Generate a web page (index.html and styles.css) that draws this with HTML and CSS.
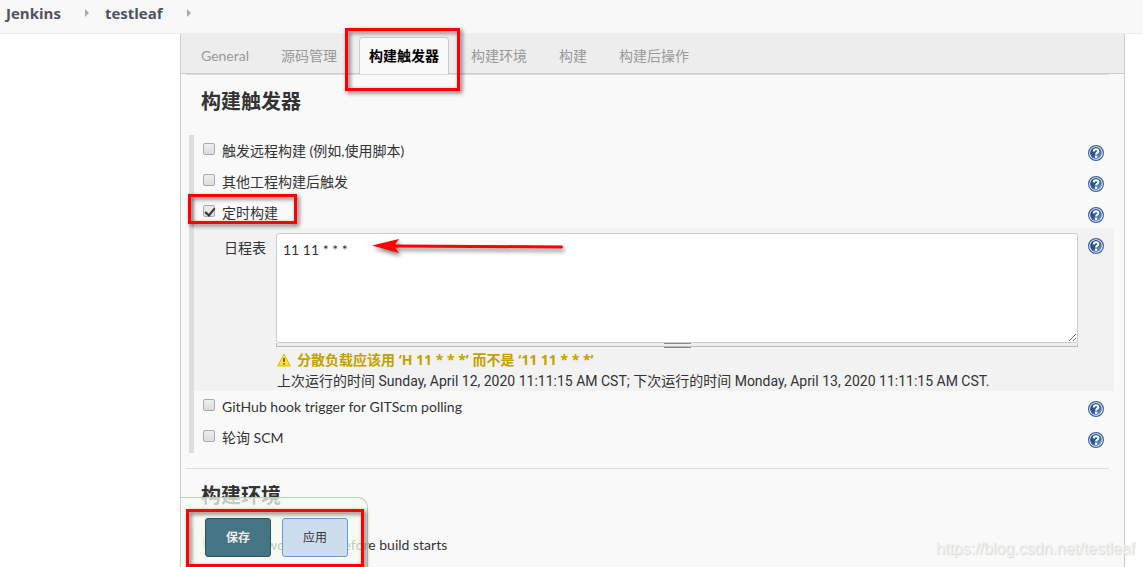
FILE: index.html
```html
<!DOCTYPE html>
<html lang="zh-CN">

<head>
    <meta charset="UTF-8">
    <meta name="viewport" content="width=device-width, initial-scale=1.0">
    <title>testleaf Config [Jenkins]</title>
    <link rel="stylesheet" href="styles.css">
</head>

<body>
    <svg class="sprite" width="0" height="0">
        <defs>
            <linearGradient id="blue" x1="0" y1="0" x2="1" y2="1">
                <stop offset="0" stop-color="#16417f" />
                <stop offset="0.5" stop-color="#2f5a9a" />
                <stop offset="1" stop-color="#8fb0dc" />
            </linearGradient>
            <symbol id="help" viewBox="0 0 16 16">
                <circle cx="8" cy="8" r="7.4" fill="#fff" stroke="#3a619c" stroke-width="1.2" />
                <circle cx="8" cy="8" r="5.9" fill="url(#blue)" />
                <path d="M5.7 6.4C5.7 3.4 10.4 3.5 10.3 6.1C10.2 7.7 8.1 7.6 8.1 9.6" fill="none" stroke="#fff" stroke-width="2" />
                <rect x="7" y="10.6" width="2.2" height="2.2" fill="#fff" />
            </symbol>
        </defs>
    </svg>

    <nav class="breadcrumbs">
        <a href="#">Jenkins</a>
        <span class="arrow"></span>
        <a href="#">testleaf</a>
        <span class="arrow"></span>
    </nav>

    <div class="page">
        <aside class="side-panel"></aside>

        <main class="main-panel">
            <nav class="tab-bar">
                <a class="tab" href="#">General</a>
                <a class="tab" href="#">源码管理</a>
                <a class="tab active" href="#">构建触发器<span class="mark mark-tab"></span></a>
                <a class="tab" href="#">构建环境</a>
                <a class="tab" href="#">构建</a>
                <a class="tab" href="#">构建后操作</a>
            </nav>

            <form class="config">
                <section class="section">
                    <h2>构建触发器</h2>
                    <div class="group">
                        <div class="row">
                            <input type="checkbox" id="remote">
                            <label for="remote">触发远程构建 (例如,使用脚本)</label>
                            <button type="button" class="help" aria-label="帮助"><svg><use href="#help" /></svg></button>
                        </div>
                        <div class="row">
                            <input type="checkbox" id="upstream">
                            <label for="upstream">其他工程构建后触发</label>
                            <button type="button" class="help" aria-label="帮助"><svg><use href="#help" /></svg></button>
                        </div>
                        <div class="row">
                            <input type="checkbox" id="timer" checked>
                            <label for="timer">定时构建</label>
                            <button type="button" class="help" aria-label="帮助"><svg><use href="#help" /></svg></button>
                            <span class="mark mark-row"></span>
                        </div>
                        <div class="schedule">
                            <label for="spec">日程表</label>
                            <div class="editor">
                                <textarea id="spec" spellcheck="false">11 11 * * *</textarea>
                                <div class="grip"></div>
                                <p class="warning">
                                    <svg viewBox="0 0 14 14">
                                        <path d="M7 1L13.3 13H0.7Z" fill="#fbe334" stroke="#d9b81c" stroke-linejoin="round" />
                                        <path d="M7 5V9M7 10.2V11.6" stroke="#5c4a10" stroke-width="1.6" />
                                    </svg>
                                    分散负载应该用 ‘H 11 * * *’ 而不是 ‘11 11 * * *’
                                </p>
                                <p class="run-times">上次运行的时间 Sunday, April 12, 2020 11:11:15 AM CST; 下次运行的时间 Monday, April 13, 2020 11:11:15 AM CST.</p>
                                <svg class="pointer" viewBox="0 0 194 16">
                                    <path d="M0 6.5L27 0L23 5.5L190 6.5Q192 8 190 9.5L23 8.5L27 14Z" fill="#f00" />
                                </svg>
                            </div>
                            <button type="button" class="help" aria-label="帮助"><svg><use href="#help" /></svg></button>
                        </div>
                        <div class="row">
                            <input type="checkbox" id="github">
                            <label for="github">GitHub hook trigger for GITScm polling</label>
                            <button type="button" class="help" aria-label="帮助"><svg><use href="#help" /></svg></button>
                        </div>
                        <div class="row">
                            <input type="checkbox" id="scm">
                            <label for="scm">轮询 SCM</label>
                            <button type="button" class="help" aria-label="帮助"><svg><use href="#help" /></svg></button>
                        </div>
                    </div>
                </section>

                <section class="section">
                    <h2>构建环境</h2>
                    <div class="group">
                        <div class="row">
                            <input type="checkbox" id="cleanup">
                            <label for="cleanup">Delete workspace before build starts</label>
                        </div>
                    </div>
                </section>

                <div class="bottom-sticker">
                    <button type="submit" class="btn primary">保存</button>
                    <button type="button" class="btn">应用</button>
                    <span class="mark mark-buttons"></span>
                </div>
            </form>
        </main>
    </div>

    <div class="watermark">https://blog.csdn.net/testleaf</div>
</body>

</html>
```

FILE: styles.css
```css
* {
    box-sizing: border-box;
}

body {
    display: flex;
    flex-direction: column;
    height: 100vh;
    margin: 0;
    overflow: hidden;
    background-color: #fff;
    color: #333;
    font-family: Lato, "Noto Sans CJK SC", sans-serif;
    font-size: 14px;
    line-height: 20px;
}

h2,
p {
    margin: 0;
}

a {
    color: inherit;
    text-decoration: none;
}

.sprite {
    position: absolute;
}

/* breadcrumbs */
.breadcrumbs {
    display: flex;
    align-items: center;
    height: 34px;
    padding: 0 6px 7px;
    background-color: #f8f8f8;
    border-bottom: 1px solid #eee;
    color: #4d545d;
    font-family: "Open Sans", sans-serif;
    font-size: 15px;
    font-weight: bold;
}

.arrow {
    margin: 0 16px 0 24px;
    border: 4px solid transparent;
    border-left-color: #aaa;
    border-right: 0;
}

/* layout */
.page {
    display: flex;
    flex: 1;
    min-height: 0;
    padding-right: 18px;
}

.side-panel {
    width: 180px;
}

.main-panel {
    position: relative;
    flex: 1;
    background-color: #f9f9f9;
    border: 1px solid #ccc;
    border-width: 0 1px;
}

/* tabs */
.tab-bar {
    display: flex;
    align-items: flex-end;
    gap: 12px;
    height: 40px;
    padding-left: 10px;
    background-color: #ededed;
    border-bottom: 1px solid #ccc;
    color: #999;
}

.tab {
    position: relative;
    height: 37px;
    margin-bottom: -1px;
    padding: 8px 9px;
    border: 1px solid transparent;
    border-bottom: 0;
}

.tab.active {
    background-color: #f9f9f9;
    border-color: #ccc;
    border-radius: 4px 4px 0 0;
    color: #000;
    font-weight: bold;
}

/* form */
.config {
    padding: 0 10px 0 8px;
}

.section {
    position: relative;
    padding-top: 17px;
}

.section::before {
    content: "";
    position: absolute;
    top: 0;
    right: 5px;
    left: -3px;
    border-top: 1px solid #ddd;
}

.section + .section {
    margin-top: 15px;
}

h2 {
    margin-bottom: 24px;
    padding-left: 12px;
    font-size: 20px;
    line-height: 20px;
}

.group {
    border-left: 5px solid #ddd;
}

.row {
    position: relative;
    display: flex;
    align-items: flex-start;
    height: 31px;
    padding: 6px 10px 0 9px;
}

.row input {
    appearance: none;
    width: 12px;
    height: 12px;
    margin: 2px 7px 0 0;
    background: linear-gradient(#eee, #dcdcdc);
    border: 1px solid #aaa;
    border-radius: 2px;
}

.row input:checked::after {
    content: "";
    display: block;
    width: 4px;
    height: 8px;
    margin: 0 0 0 3px;
    border: solid #333;
    border-width: 0 2px 2px 0;
    transform: rotate(40deg);
}

.help {
    width: 16px;
    height: 16px;
    margin: 4px 0 0 auto;
    padding: 0;
    background: none;
    border: 0;
    cursor: pointer;
}

.help svg {
    display: block;
    width: 16px;
    height: 16px;
}

.schedule {
    display: flex;
    padding: 5px 10px 0 30px;
    background-color: #f2f2f2;
}

.schedule > label {
    width: 52px;
    padding-top: 5px;
}

.schedule .help {
    margin-top: 5px;
}

.editor {
    position: relative;
    flex: 1;
    margin-right: 10px;
}

textarea {
    display: block;
    width: 100%;
    height: 110px;
    padding: 6px;
    border: 1px solid #ccc;
    border-radius: 3px;
    color: #333;
    font: inherit;
    resize: vertical;
}

.grip {
    display: flex;
    justify-content: center;
    height: 4px;
    background-color: #eee;
    border: 1px solid #bbb;
    border-top: 0;
}

.grip::after {
    content: "";
    width: 27px;
    height: 3px;
    border: 1px solid #888;
    border-width: 1px 0;
}

.editor p {
    height: 20px;
    padding-left: 1px;
}

.editor .warning {
    display: flex;
    align-items: center;
    gap: 6px;
    height: 22px;
    margin-top: 2px;
    color: #c4a000;
    font-family: "Open Sans", "Noto Sans CJK SC", sans-serif;
    font-weight: bold;
}

.warning svg {
    width: 14px;
    height: 14px;
}

.run-times {
    font-family: Roboto, "Noto Sans CJK SC", sans-serif;
}

/* save bar */
.bottom-sticker {
    position: absolute;
    bottom: 0;
    left: 0;
    display: flex;
    gap: 11px;
    padding: 20px 19px 10px 24px;
    background-color: rgba(245, 249, 239, 0.75);
    border: 1px solid #b4cfbc;
    border-width: 1px 1px 0 0;
    border-radius: 0 10px 0 0;
}

.btn {
    width: 66px;
    height: 39px;
    padding: 0;
    background-color: #ccdded;
    border: 1px solid #6a9ad0;
    border-radius: 3px;
    color: #333;
    font: inherit;
    font-size: 12px;
    cursor: pointer;
}

.btn.primary {
    background-color: #457485;
    border-color: #2b5361;
    color: #eee;
    font-weight: bold;
}

/* annotations */
.mark {
    position: absolute;
    z-index: 1;
    border: 3px solid #f00;
    filter: drop-shadow(2px 2px 2px rgba(0, 0, 0, 0.6));
    pointer-events: none;
}

.mark-tab {
    inset: -10px -12px -17px -15px;
}

.mark-row {
    top: -3px;
    left: -6px;
    width: 109px;
    height: 30px;
}

.mark-buttons {
    inset: 11px 3px 0 5px;
}

.pointer {
    position: absolute;
    top: 6px;
    left: 96px;
    width: 194px;
    height: 16px;
    overflow: visible;
    filter: drop-shadow(2px 3px 2px rgba(0, 0, 0, 0.5));
}

.watermark {
    position: absolute;
    right: 8px;
    bottom: 8px;
    color: #f0f0f0;
    font-family: "Liberation Sans", Arial, sans-serif;
    font-size: 16px;
    text-shadow: 1px 1px 1px #d4d4d4;
}
```
